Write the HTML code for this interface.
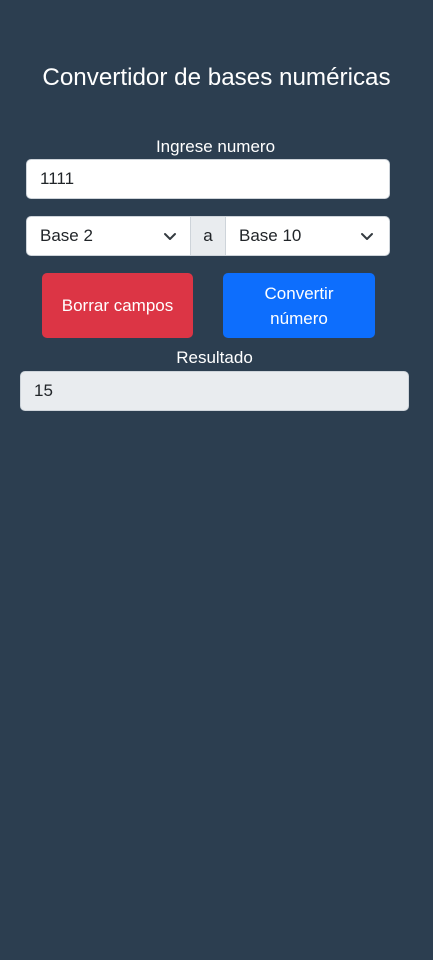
<!DOCTYPE html>
<html><head><meta charset="utf-8"><style>
*{box-sizing:border-box;margin:0;padding:0}
body{width:433px;height:960px;background:#2c3e50;font-family:"Liberation Sans",sans-serif;color:#fff;position:relative;overflow:hidden}
.abs{position:absolute}
h1{position:absolute;left:0;width:433px;top:64px;text-align:center;font-weight:normal;font-size:24.2px}
.lbl{position:absolute;width:433px;text-align:center;font-size:17px;left:0}
.in{position:absolute;background:#fff;border:1px solid #ced4da;border-radius:5px;color:#212529;font-size:17px;padding-left:13px;line-height:37px}
.btn{position:absolute;border-radius:5px;color:#fff;font-size:17px;display:flex;align-items:center;justify-content:center;text-align:center;line-height:25px}
svg{position:absolute}
</style></head><body>
<h1>Convertidor de bases numéricas</h1>
<div class="lbl" style="top:137px;left:-1px">Ingrese numero</div>
<div class="in" style="left:26px;top:159px;width:364px;height:40px">1111</div>
<div class="in" style="left:26px;top:216px;width:165px;height:40px;border-radius:5px 0 0 5px">Base 2</div>
<div class="abs" style="left:190px;top:216px;width:36px;height:40px;background:#e9ecef;border:1px solid #ced4da;color:#212529;text-align:center;line-height:37px;font-size:17px">a</div>
<div class="in" style="left:225px;top:216px;width:165px;height:40px;border-radius:0 5px 5px 0">Base 10</div>
<svg style="left:163px;top:231px" width="14" height="10" viewBox="0 0 14 10"><path d="M2 3l5 5 5-5" fill="none" stroke="#343a40" stroke-width="2" stroke-linecap="round" stroke-linejoin="round"/></svg>
<svg style="left:360px;top:231px" width="14" height="10" viewBox="0 0 14 10"><path d="M2 3l5 5 5-5" fill="none" stroke="#343a40" stroke-width="2" stroke-linecap="round" stroke-linejoin="round"/></svg>
<div class="btn" style="left:42px;top:273px;width:151px;height:65px;background:#dc3545">Borrar campos</div>
<div class="btn" style="left:223px;top:273px;width:152px;height:65px;background:#0d6efd">Convertir<br>número</div>
<div class="lbl" style="top:348px;left:-2px">Resultado</div>
<div class="in" style="left:20px;top:371px;width:389px;height:40px;background:#e9ecef">15</div>
</body></html>
